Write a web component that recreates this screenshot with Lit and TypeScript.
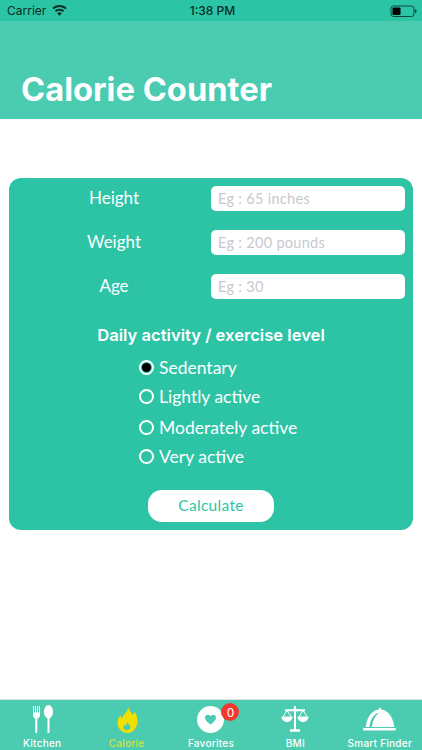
import { LitElement, html, css, svg } from "lit";
import { customElement } from "lit/decorators.js";

const fields = [
  ["Height", "Eg : 65 inches"],
  ["Weight", "Eg : 200 pounds"],
  ["Age", "Eg : 30"],
];
const levels = ["Sedentary", "Lightly active", "Moderately active", "Very active"];

const kitchen = svg`<svg class="ic" width="44" height="30" viewBox="0 0 44 30" fill="#fff">
  <path d="M13 1h1v6.500h1V1h1v6.500h1V1h1v6.500h1V1h1v9c0 2-1.300 3.300-2.700 3.800V28h-2V13.800C14.300 13.300 13 12 13 10z"/>
  <path d="M28.500 0c2.600 0 4.500 3.400 4.500 7 0 3.300-1.500 5.600-3.500 6.200V28h-2V13.200C25.500 12.600 24 10.300 24 7c0-3.600 1.900-7 4.500-7z"/>
</svg>`;
const flame = svg`<svg class="ic" width="44" height="30" viewBox="0 0 44 30">
  <path fill="#f0e000" d="M23.500 2c.6 4 2.600 5.300 4.400 7.800.8-.8 1.300-1.800 1.400-3 2.200 2.700 3.200 5.800 3.200 9 0 7.200-4.700 12.200-10 12.200s-10-4.200-10-10.200c0-3 1.300-5.500 2.800-7.600.3 1.400 1 2.400 1.900 3C18 9.500 22.800 7 23.500 2z"/>
  <path fill="#4bcbb0" d="M22.300 17c.4 1.600 3.200 3 3.200 5.300 0 1.700-1.500 2.900-3.500 2.900s-3.500-1.200-3.500-2.900c0-1.200.6-2 1.200-2.600.2.600.5 1 .9 1.200.2-1.400 1.500-2.200 1.700-3.900z"/>
</svg>`;
const heart = svg`<svg class="ic" width="44" height="30" viewBox="0 0 44 30">
  <circle cx="21.500" cy="14.500" r="13.500" fill="#fff"/>
  <path fill="#4bcbb0" d="M21.500 19.500c-3.300-2.400-5.500-4.300-5.500-6.700 0-1.700 1.300-3 2.900-3 1.100 0 2.100.6 2.600 1.500.5-.9 1.500-1.500 2.600-1.500 1.600 0 2.900 1.300 2.900 3 0 2.400-2.200 4.300-5.500 6.700z"/>
</svg>`;
const scale = svg`<svg class="ic" width="44" height="30" viewBox="0 0 44 30" fill="none" stroke="#fff">
  <path stroke-width="2" d="M22 1v24M12 5.200h20"/>
  <path stroke-width="2.500" d="M17 25.500h10"/>
  <circle cx="22" cy="5" r="2" fill="#fff" stroke="none"/>
  <path stroke-width="1" d="M14 5.500 10 11.500M14 5.500l4 6M30 5.500l-4 6M30 5.500l4 6"/>
  <path fill="#fff" stroke="none" d="M8.500 11.500h11c0 3-2.300 5.500-5.500 5.500s-5.500-2.500-5.500-5.500zM24.500 11.500h11c0 3-2.300 5.500-5.500 5.500s-5.500-2.500-5.500-5.500z"/>
</svg>`;
const cloche = svg`<svg class="ic" width="44" height="30" viewBox="0 0 44 30" fill="#fff">
  <circle cx="22" cy="4" r="1.200"/>
  <path d="M22 4.500c7.500 0 13 6.500 14.300 17.500H7.700C9 11 14.500 4.500 22 4.500z"/>
  <path fill="#4bcbb0" d="M20 7.800c-4.800 2.200-7.800 7.200-8.500 14.200h2.300c.8-6.200 2.800-10.600 6.600-13.800z"/>
  <rect x="5" y="23" width="33" height="2.500" rx="1"/>
</svg>`;

@customElement("app-root")
export class AppRoot extends LitElement {
  static styles = css`
    :host {
      display: flex;
      flex-direction: column;
      width: 422px;
      height: 750px;
      background: #fff;
      font-family: "Inter", "Liberation Sans", sans-serif;
      overflow: hidden;
    }
    .status {
      height: 21px;
      background: #2bc5a6;
      display: grid;
      grid-template-columns: 1fr auto 1fr;
      align-items: center;
      padding: 0 4px 0 7px;
      font-size: 12px;
      color: #0a2a24;
    }
    .status .left { display: flex; align-items: center; gap: 6px; }
    .status .right { display: flex; justify-content: flex-end; }
    .status .time { font-weight: 500; }
    .head {
      height: 98px;
      background: #4bcbb0;
      display: flex;
      align-items: flex-end;
      padding: 0 21px 8px;
      box-sizing: border-box;
    }
    .head h1 {
      margin: 0;
      font-size: 32.700px;
      line-height: 44px;
      font-weight: 700;
      color: #fff;
    }
    .main {
      flex: 1;
      padding: 59px 9px 0;
    }
    .card {
      height: 352px;
      box-sizing: border-box;
      background: #2dc4a6;
      border-radius: 12px;
      padding: 8px 0;
      display: flex;
      flex-direction: column;
      color: #fff;
    }
    .row {
      display: grid;
      grid-template-columns: 202px 194px;
      height: 25px;
      margin-bottom: 19px;
      align-items: center;
    }
    .row label {
      text-align: center;
      font-family: "Lato", sans-serif;
      font-size: 17px;
      padding: 0 0 2px 8px;
    }
    .input {
      height: 25px;
      background: #fff;
      border-radius: 5px;
      box-sizing: border-box;
      padding-left: 7px;
      font-family: "Lato", sans-serif;
      font-size: 14.500px;
      line-height: 25px;
      color: #c8c8ce;
      letter-spacing: 0.300px;
    }
    .sub {
      margin-top: 7px;
      text-align: center;
      font-size: 16.600px;
      font-weight: 600;
      line-height: 20px;
    }
    .levels {
      margin-top: 8px;
      padding-left: 130px;
      display: flex;
      flex-direction: column;
    }
    .lvl {
      display: flex;
      align-items: center;
      gap: 5px;
      height: 29px;
      font-family: "Lato", sans-serif;
      font-size: 17.500px;
    }
    .lvl:nth-child(3) { margin-top: 2px; }
    .radio {
      width: 15px;
      height: 15px;
      border-radius: 50%;
      border: 2px solid #fff;
      box-sizing: border-box;
      display: flex;
      align-items: center;
      justify-content: center;
    }
    .radio.on::after {
      content: "";
      width: 9px;
      height: 9px;
      border-radius: 50%;
      background: #000;
    }
    .btn {
      align-self: center;
      margin-top: 19px;
      width: 126px;
      height: 32px;
      padding-bottom: 2px;
      box-sizing: border-box;
      border-radius: 14px;
      background: #fff;
      color: #2dc4a6;
      font-family: "Lato", sans-serif;
      font-size: 15.500px;
      display: flex;
      align-items: center;
      justify-content: center;
      letter-spacing: 0.300px;
    }
    .tabs {
      height: 51px;
      background: #4bcbb0;
      border-top: 1px solid #d9e6e2;
      box-sizing: border-box;
      display: grid;
      grid-template-columns: repeat(5, 1fr);
    }
    .tab {
      display: flex;
      flex-direction: column;
      align-items: center;
      color: #fff;
      font-size: 10px;
      font-weight: 500;
      letter-spacing: 0.250px;
      position: relative;
      padding-top: 5px;
      white-space: nowrap;
    }
    .tab .ic { display: block; height: 30px; }
    .tab span.l { margin-top: 2px; line-height: 12px; }
    .tab.active { color: #d6e23a; }
    .badge {
      position: absolute;
      top: 3px;
      left: 50%;
      margin-left: 10.500px;
      width: 18px;
      height: 18px;
      border-radius: 50%;
      background: #f0392f;
      color: #fff;
      font-size: 12px;
      font-weight: 400;
      display: flex;
      align-items: center;
      justify-content: center;
      letter-spacing: 0;
    }
  `;

  render() {
    return html`
      <div class="status">
        <div class="left">
          <span>Carrier</span>
          <svg width="15" height="11" viewBox="0 0 15 11" fill="#0a2a24">
            <path d="M7.500 0C4.700 0 2.200 1.100.3 2.900l1.300 1.400C3.100 2.800 5.200 1.900 7.500 1.900s4.400.9 5.900 2.400l1.300-1.400C12.800 1.100 10.300 0 7.500 0z"/>
            <path d="M7.500 3.700c-1.800 0-3.400.7-4.600 1.900l1.300 1.400c.9-.8 2-1.300 3.300-1.300s2.400.5 3.300 1.300l1.300-1.400C10.900 4.400 9.300 3.700 7.500 3.700z"/>
            <path d="M7.500 7.200c-.9 0-1.700.4-2.300 1l2.300 2.500 2.300-2.500c-.6-.6-1.400-1-2.300-1z"/>
          </svg>
        </div>
        <div class="time">1:38 PM</div>
        <div class="right">
          <svg width="28" height="12" viewBox="0 0 28 12">
            <rect x="1" y="1" width="23" height="10.500" rx="2.500" fill="none" stroke="#0a2a24" stroke-width=".8"/>
            <rect x="2.500" y="2.500" width="8" height="7.500" rx="1" fill="#000"/>
            <path d="M25.200 4.500c.8.200 1.300.8 1.300 1.700s-.5 1.500-1.300 1.700z" fill="#0a2a24"/>
          </svg>
        </div>
      </div>
      <div class="head"><h1>Calorie Counter</h1></div>
      <div class="main">
        <div class="card">
          ${fields.map(
            ([l, p]) => html`<div class="row"><label>${l}</label><div class="input">${p}</div></div>`
          )}
          <div class="sub">Daily activity / exercise level</div>
          <div class="levels">
            ${levels.map(
              (l, i) => html`<div class="lvl"><span class="radio ${i === 0 ? "on" : ""}"></span>${l}</div>`
            )}
          </div>
          <div class="btn">Calculate</div>
        </div>
      </div>
      <div class="tabs">
        <div class="tab">${kitchen}<span class="l">Kitchen</span></div>
        <div class="tab active">${flame}<span class="l">Calorie</span></div>
        <div class="tab">${heart}<span class="badge">0</span><span class="l">Favorites</span></div>
        <div class="tab">${scale}<span class="l">BMI</span></div>
        <div class="tab">${cloche}<span class="l">Smart Finder</span></div>
      </div>
    `;
  }
}
